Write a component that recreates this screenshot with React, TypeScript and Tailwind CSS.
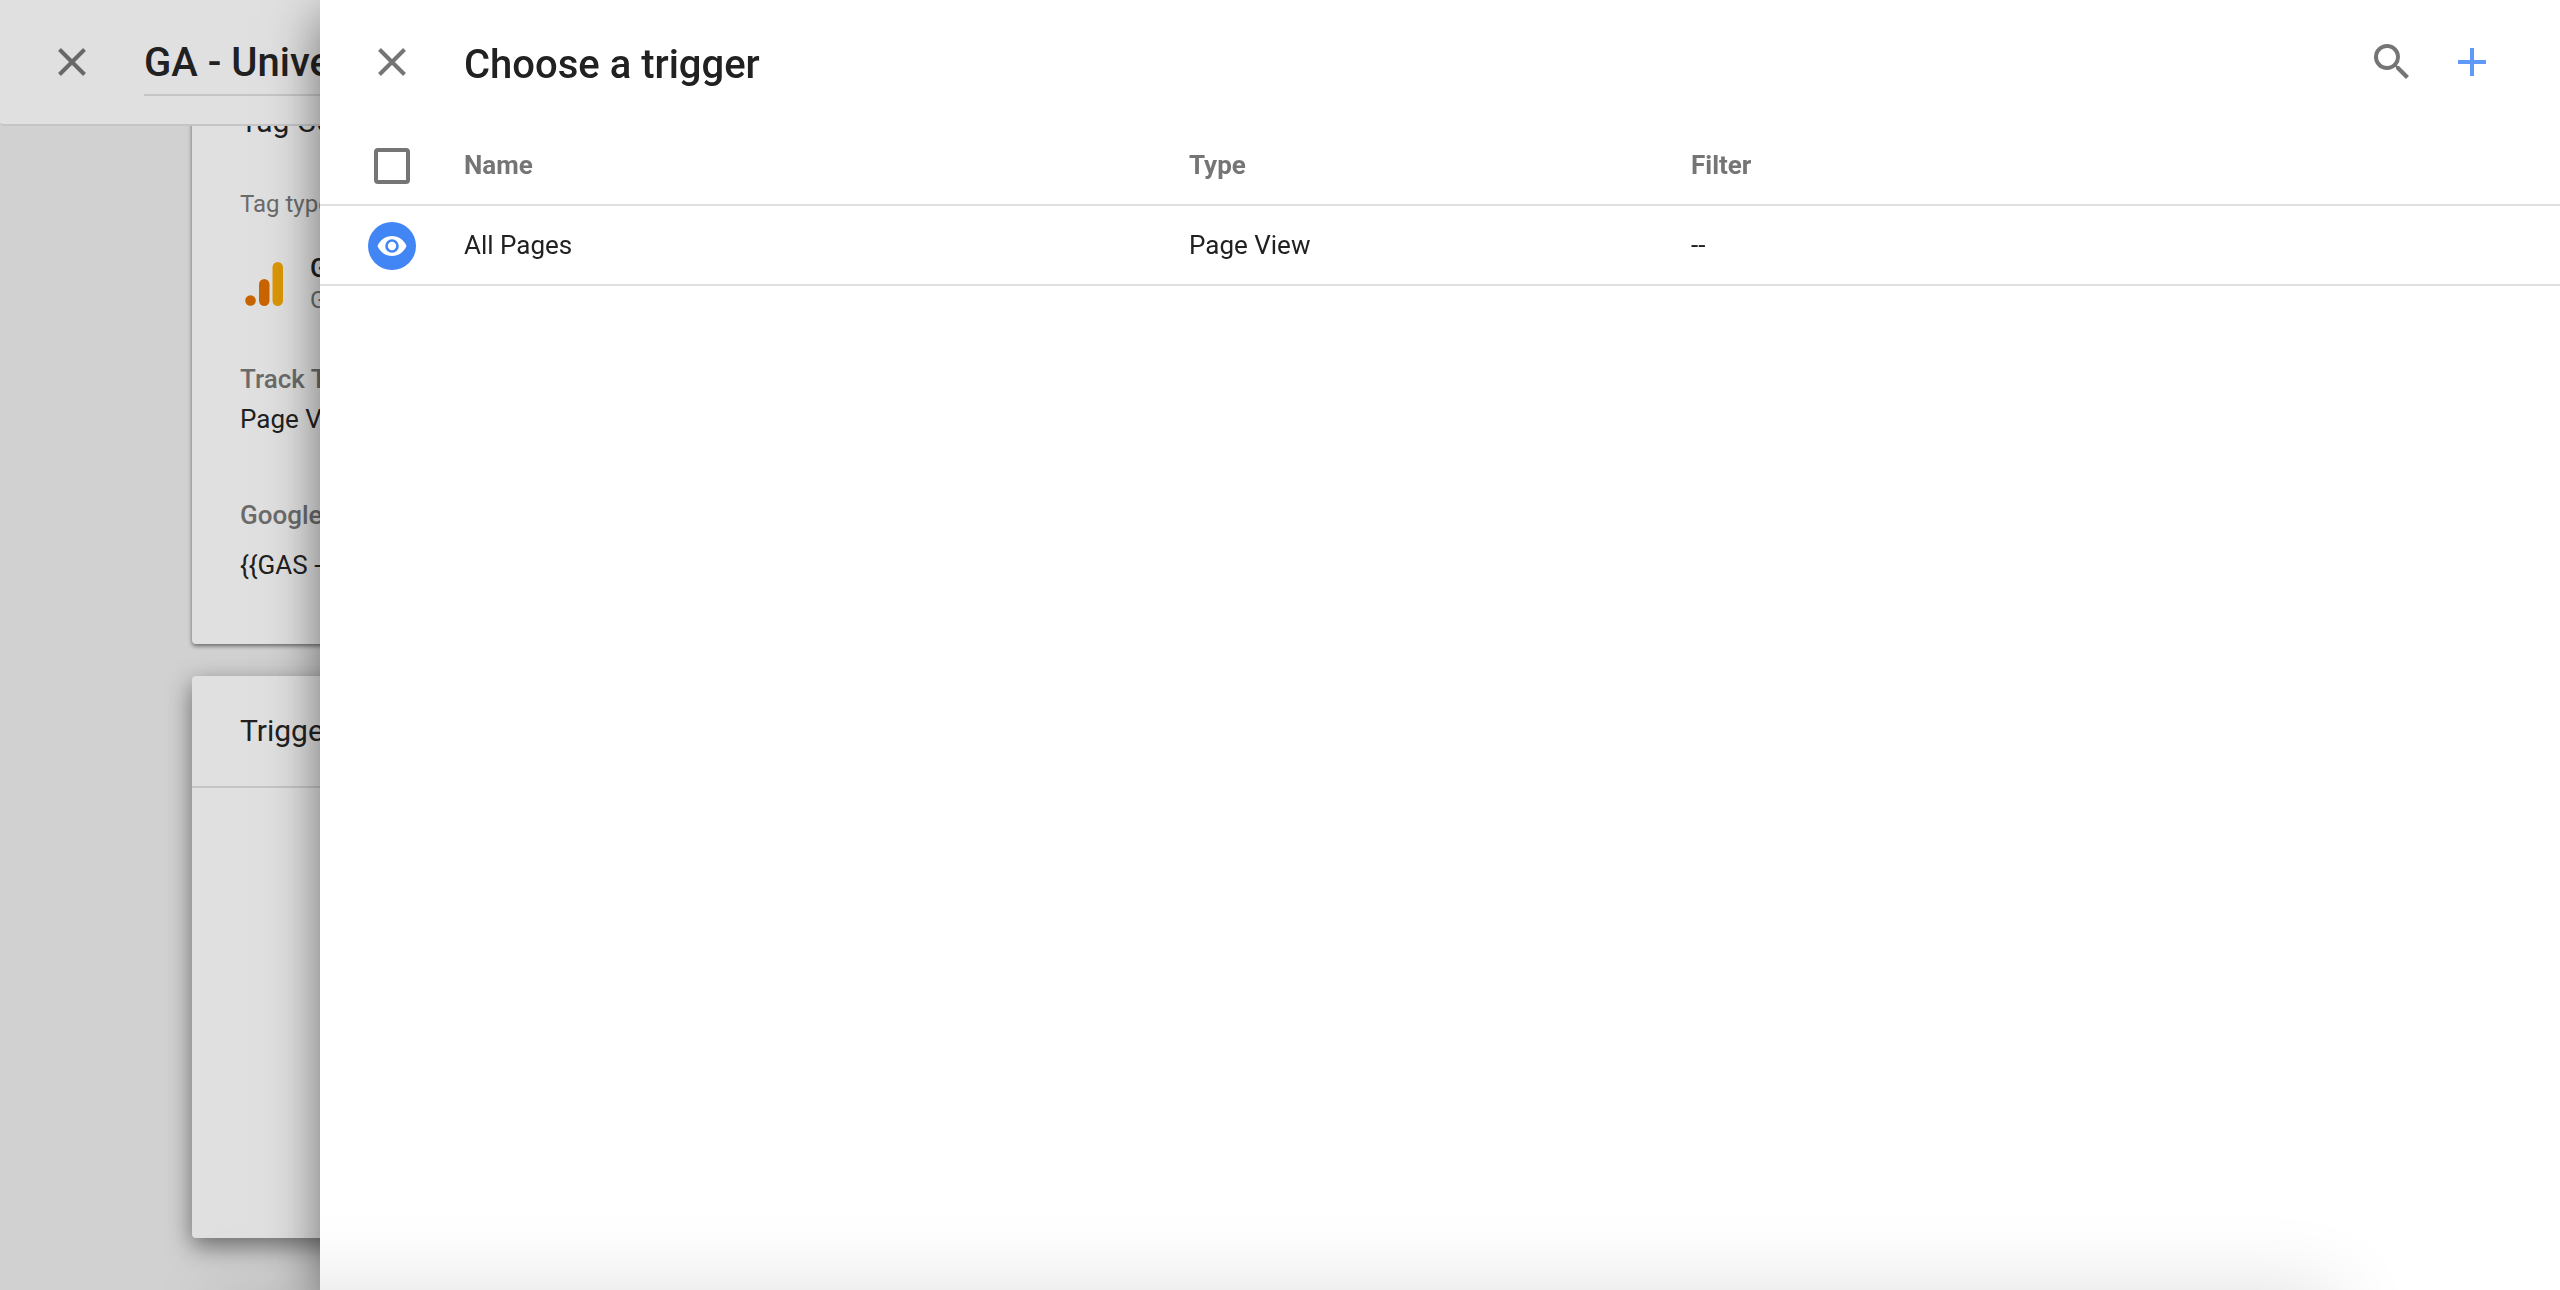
import React from "react";

function CloseIcon() {
  return (
    <svg viewBox="0 0 48 48" className="size-12" fill="none" stroke="currentColor" strokeWidth="4" aria-hidden="true">
      <path d="M11.5 11.5 36.5 36.5M36.5 11.5 11.5 36.5" />
    </svg>
  );
}

function SearchIcon() {
  return (
    <svg viewBox="0 0 24 24" className="size-12" fill="currentColor" aria-hidden="true">
      <path d="M15.5 14h-.79l-.28-.27A6.471 6.471 0 0 0 16 9.5 6.5 6.5 0 1 0 9.5 16c1.61 0 3.09-.59 4.23-1.57l.27.28v.79l5 4.99L20.49 19l-4.99-5zm-6 0C7.01 14 5 11.99 5 9.5S7.01 5 9.5 5 14 7.01 14 9.5 11.99 14 9.5 14z" />
    </svg>
  );
}

function PlusIcon() {
  return (
    <svg viewBox="0 0 48 48" className="size-12" fill="currentColor" aria-hidden="true">
      <path d="M22 10h4v12h12v4H26v12h-4V26H10v-4h12z" />
    </svg>
  );
}

function EyeIcon() {
  return (
    <svg viewBox="0 0 48 48" className="size-12" aria-hidden="true">
      <circle cx="24" cy="24" r="24" fill="#4285f4" />
      <path d="M9.5 24C12 18 17.500 14 24 14s12 4 14.500 10C36 30 30.500 34 24 34S12 30 9.500 24z" fill="#fff" />
      <circle cx="24" cy="24" r="5.500" fill="#fff" stroke="#4285f4" strokeWidth="2.600" />
    </svg>
  );
}

function AnalyticsLogo() {
  return (
    <svg viewBox="0 0 48 48" className="size-12" aria-hidden="true">
      <circle cx="10.500" cy="40.500" r="5.300" fill="#c96500" />
      <rect x="19" y="19" width="10.500" height="27" rx="5.250" fill="#c96500" />
      <rect x="32.500" y="2" width="10.500" height="44" rx="5.250" fill="#db9606" />
    </svg>
  );
}

function TagEditor() {
  return (
    <div className="flex min-h-screen flex-col bg-[#d1d1d1]">
      <header className="z-10 flex h-[126px] shrink-0 rounded-bl border-b-2 border-[#c5c5c5] bg-[#e0e0e0] pl-12">
        <button type="button" aria-label="Close tag" className="mt-[38px] size-12 text-[#686868]">
          <CloseIcon />
        </button>
        <input
          aria-label="Tag name"
          defaultValue="GA - Universal Analytics"
          className="ml-12 h-24 flex-1 border-b-2 border-[#c5c5c5] bg-transparent pt-10 pb-2.5 text-[40px] font-medium outline-none"
        />
      </header>
      <main className="-mt-8 flex flex-col gap-8 pl-48">
        <section className="h-[550px] rounded bg-[#e0e0e0] px-12 pt-2 shadow-[0_2px_4px_rgba(0,0,0,0.5)]">
          <h2 className="text-[30px] leading-10">Tag Configuration</h2>
          <p className="mt-[46px] text-2xl leading-8 text-[#6b6b6b]">Tag type</p>
          <div className="mt-8 flex items-center gap-[22px]">
            <AnalyticsLogo />
            <div className="leading-8">
              <p className="text-[26px] font-medium">Google Analytics</p>
              <p className="text-2xl text-[#6b6b6b]">Google Marketing Platform</p>
            </div>
          </div>
          <h3 className="mt-[43px] text-[26px] leading-10 font-medium text-[#6b6b6b]">Track Type</h3>
          <p className="text-[26px] leading-10">Page View</p>
          <h3 className="mt-14 text-[26px] leading-10 font-medium text-[#6b6b6b]">Google Analytics Settings</h3>
          <p className="mt-2.5 text-[26px] leading-10">{"{{GAS - Settings}}"}</p>
        </section>
        <section className="h-[562px] rounded bg-[#e0e0e0] shadow-[0_8px_24px_rgba(0,0,0,0.5)]">
          <h2 className="flex h-28 items-center border-b-2 border-[#c5c5c5] px-12 pb-0.5 text-[30px]">Triggering</h2>
        </section>
      </main>
    </div>
  );
}

const headCell = "border-b-2 border-[#e0e0e0] font-bold";
const bodyCell = "border-b-2 border-[#e0e0e0]";

function TriggerPicker() {
  return (
    <div
      role="dialog"
      aria-labelledby="picker-title"
      className="fixed inset-y-0 right-0 left-80 z-20 bg-white shadow-[0_16px_48px_rgba(0,0,0,0.5)]"
    >
      <header className="flex h-[126px] items-center pr-16 pb-0.5 pl-12">
        <button type="button" aria-label="Close" className="size-12 text-[#757575]">
          <CloseIcon />
        </button>
        <h1 id="picker-title" className="ml-12 flex-1 pt-1.5 text-[40px] font-medium">
          Choose a trigger
        </h1>
        <button type="button" aria-label="Search" className="size-12 text-[#757575]">
          <SearchIcon />
        </button>
        <button type="button" aria-label="New trigger" className="ml-8 size-12 text-[#6099f8]">
          <PlusIcon />
        </button>
      </header>
      <table className="w-full table-fixed border-separate border-spacing-0 text-left text-[26px]">
        <colgroup>
          <col className="w-36" />
          <col className="w-[725px]" />
          <col className="w-[502px]" />
          <col />
        </colgroup>
        <thead>
          <tr className="h-20 text-[#757575]">
            <th className="border-b-2 border-[#e0e0e0] pt-0.5 pl-[54px]">
              <input
                type="checkbox"
                aria-label="Select all triggers"
                className="block size-9 appearance-none rounded border-4 border-[#757575] checked:bg-[#4285f4]"
              />
            </th>
            <th className={headCell}>Name</th>
            <th className={headCell}>Type</th>
            <th className={headCell}>Filter</th>
          </tr>
        </thead>
        <tbody>
          <tr className="h-20">
            <td className="border-b-2 border-[#e0e0e0] pt-0.5 pl-12">
              <EyeIcon />
            </td>
            <td className={bodyCell}>All Pages</td>
            <td className={bodyCell}>Page View</td>
            <td className={bodyCell}>--</td>
          </tr>
        </tbody>
      </table>
    </div>
  );
}

export default function App() {
  return (
    <div className="h-screen overflow-hidden font-[Roboto,sans-serif] text-[#212121]">
      <TagEditor />
      <TriggerPicker />
      <div className="pointer-events-none fixed top-full right-56 left-56 z-30 h-40 shadow-[0_0_80px_rgba(0,0,0,0.13)]" />
    </div>
  );
}
